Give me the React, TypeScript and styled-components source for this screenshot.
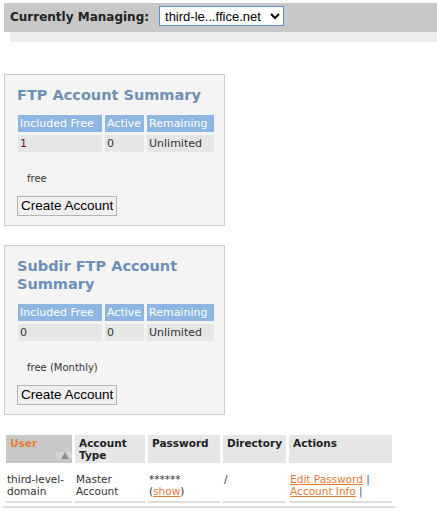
import React from 'react';
import styled, { createGlobalStyle } from 'styled-components';

const GlobalStyle = createGlobalStyle`
  html, body {
    margin: 0;
    padding: 0;
    background: #ffffff;
    font-family: "DejaVu Sans", Verdana, sans-serif;
    color: #333;
  }
`;

const Page = styled.div`
  padding: 3px 0 0 4px;
`;

const ManageBar = styled.div`
  display: flex;
  align-items: center;
  gap: 10px;
  height: 29px;
  background: #c8c8c8;
  padding-left: 6px;
`;

const ManageLabel = styled.span`
  font-size: 12px;
  font-weight: bold;
  color: #222;
  margin-top: -2px;
`;

const DomainSelect = styled.select`
  font-family: "Liberation Sans", Arial, sans-serif;
  font-size: 13px;
  height: 20px;
  width: 125px;
  margin-top: -3px;
  border: 1px solid #5b8fd6;
  background: #fff;
  color: #000;
  padding: 0 0 0 1px;
`;

const SubBar = styled.div`
  margin-left: 6px;
  height: 10px;
  background: #ececec;
`;

const SummaryBox = styled.div<{ $top: number }>`
  width: 202px;
  margin-top: ${p => p.$top}px;
  border: 1px solid #cccccc;
  background: #f4f4f4;
  padding: 11px 5px 9px 12px;
`;

const SummaryTitle = styled.h2`
  margin: 0 0 7px 0;
  font-size: 14.5px;
  line-height: 18.5px;
  font-weight: bold;
  color: #6f8fb5;
`;

const CountTable = styled.table`
  width: 202px;
  border-spacing: 3px;
  margin: 0 0 0 -2px;
  font-size: 11px;
`;

const CountHead = styled.th<{ $w: number }>`
  width: ${p => p.$w}px;
  box-sizing: border-box;
  background: #8db6e2;
  color: #fff;
  font-weight: normal;
  text-align: left;
  padding: 1px 2px;
  height: 17px;
  white-space: nowrap;
`;

const CountCell = styled.td<{ $accent?: boolean }>`
  background: #e6e6e6;
  color: ${p => (p.$accent ? '#5b1a3a' : '#333')};
  padding: 1px 2px;
  height: 15px;
`;

const PlanNote = styled.div`
  font-size: 10px;
  color: #333;
  margin: 18px 0 0 10px;
`;

const ActionButton = styled.button`
  margin-top: 12px;
  font-family: "Liberation Sans", Arial, sans-serif;
  font-size: 13.5px;
  padding: 1px 3px 2px 3px;
  background: #f0f0f0;
  border: 1px solid #b5b5b5;
  color: #000;
`;

const UserTable = styled.table`
  margin-top: 17px;
  border-spacing: 3px;
  margin-left: -1px;
  font-size: 10.5px;
  border-bottom: 2px solid #dddddd;
`;

const UserHead = styled.th<{ $w: number; $sorted?: boolean }>`
  position: relative;
  width: ${p => p.$w}px;
  box-sizing: border-box;
  height: 28px;
  background: ${p => (p.$sorted ? '#c8c8c8' : '#e6e6e6')};
  color: ${p => (p.$sorted ? '#e27d39' : '#222')};
  font-weight: bold;
  text-align: left;
  vertical-align: top;
  padding: 2px 4px 0 4px;
  line-height: 12px;
`;

const SortArrow = styled.span`
  position: absolute;
  right: 0;
  bottom: 4px;
  width: 16px;
  height: 7px;
  background: #d6d6d6;
  &::after {
    content: '';
    position: absolute;
    left: 5px;
    top: 0;
    border-left: 4px solid transparent;
    border-right: 4px solid transparent;
    border-bottom: 7px solid #8f8f8f;
  }
`;

const UserCell = styled.td`
  vertical-align: top;
  padding: 7px 2px 4px 1px;
  line-height: 12px;
  color: #333;
  border-bottom: 2px solid #dddddd;
`;

const OrangeLink = styled.a`
  color: #e07a34;
  text-decoration: underline;
`;

const Sep = styled.span`
  color: #4a5a88;
`;

function CountSummary({ included, accent }: { included: string; accent?: boolean }) {
  return (
    <CountTable>
      <tbody>
        <tr>
          <CountHead $w={84}>Included Free</CountHead>
          <CountHead $w={39}>Active</CountHead>
          <CountHead $w={67}>Remaining</CountHead>
        </tr>
        <tr>
          <CountCell $accent={accent}>{included}</CountCell>
          <CountCell>0</CountCell>
          <CountCell>Unlimited</CountCell>
        </tr>
      </tbody>
    </CountTable>
  );
}

function App() {
  return (
    <Page>
      <GlobalStyle />
      <ManageBar>
        <ManageLabel>Currently Managing:</ManageLabel>
        <DomainSelect defaultValue="d">
          <option value="d">third-le...ffice.net</option>
        </DomainSelect>
      </ManageBar>
      <SubBar />

      <SummaryBox $top={32}>
        <SummaryTitle>FTP Account Summary</SummaryTitle>
        <CountSummary included="1" accent />
        <PlanNote>free</PlanNote>
        <ActionButton>Create Account</ActionButton>
      </SummaryBox>

      <SummaryBox $top={19}>
        <SummaryTitle>Subdir FTP Account Summary</SummaryTitle>
        <CountSummary included="0" />
        <PlanNote>free (Monthly)</PlanNote>
        <ActionButton>Create Account</ActionButton>
      </SummaryBox>

      <UserTable>
        <thead>
          <tr>
            <UserHead $w={66} $sorted>
              User
              <SortArrow />
            </UserHead>
            <UserHead $w={70}>Account Type</UserHead>
            <UserHead $w={72}>Password</UserHead>
            <UserHead $w={62}>Directory</UserHead>
            <UserHead $w={103}>Actions</UserHead>
          </tr>
        </thead>
        <tbody>
          <tr>
            <UserCell>
              third-level-
              <br />
              domain
            </UserCell>
            <UserCell>
              Master
              <br />
              Account
            </UserCell>
            <UserCell>
              ******
              <br />
              (<OrangeLink href="#">show</OrangeLink>)
            </UserCell>
            <UserCell>/</UserCell>
            <UserCell>
              <OrangeLink href="#">Edit Password</OrangeLink> <Sep>|</Sep>
              <br />
              <OrangeLink href="#">Account Info</OrangeLink> <Sep>|</Sep>
            </UserCell>
          </tr>
        </tbody>
      </UserTable>
    </Page>
  );
}

export default App;
